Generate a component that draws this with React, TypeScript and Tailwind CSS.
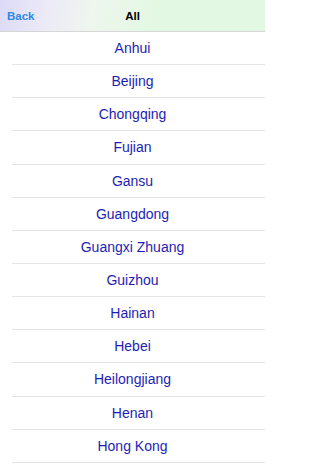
import React from "react";

const items = [
  "Anhui",
  "Beijing",
  "Chongqing",
  "Fujian",
  "Gansu",
  "Guangdong",
  "Guangxi Zhuang",
  "Guizhou",
  "Hainan",
  "Hebei",
  "Heilongjiang",
  "Henan",
  "Hong Kong",
];

export default function App() {
  return (
    <div
      className="w-[265px] h-[471px] overflow-hidden bg-white"
      style={{ fontFamily: '"Liberation Sans", Arial, sans-serif' }}
    >
      <div className="relative h-[32px] flex items-center justify-center border-b border-[#d6d6d6] bg-[linear-gradient(100deg,#dcdaf7_0%,#eceaf6_18%,#eef6ee_35%,#e2f8e2_60%,#e3f8e3_100%)]">
        <span className="absolute left-[7px] top-[9px] text-[11.5px] font-bold text-[#2d8ae3] leading-[14px]">
          Back
        </span>
        <span className="text-[11.5px] font-bold text-black leading-[14px]">All</span>
      </div>
      <div className="flex flex-col">
        {items.map((name) => (
          <div key={name} className="pl-[12px]">
            <div className="h-[33.15px] flex items-center justify-center border-b border-[#e4e4e4] pr-[12px]">
              <span className="text-[14px] text-[#1e1eb2] leading-none">{name}</span>
            </div>
          </div>
        ))}
      </div>
    </div>
  );
}
